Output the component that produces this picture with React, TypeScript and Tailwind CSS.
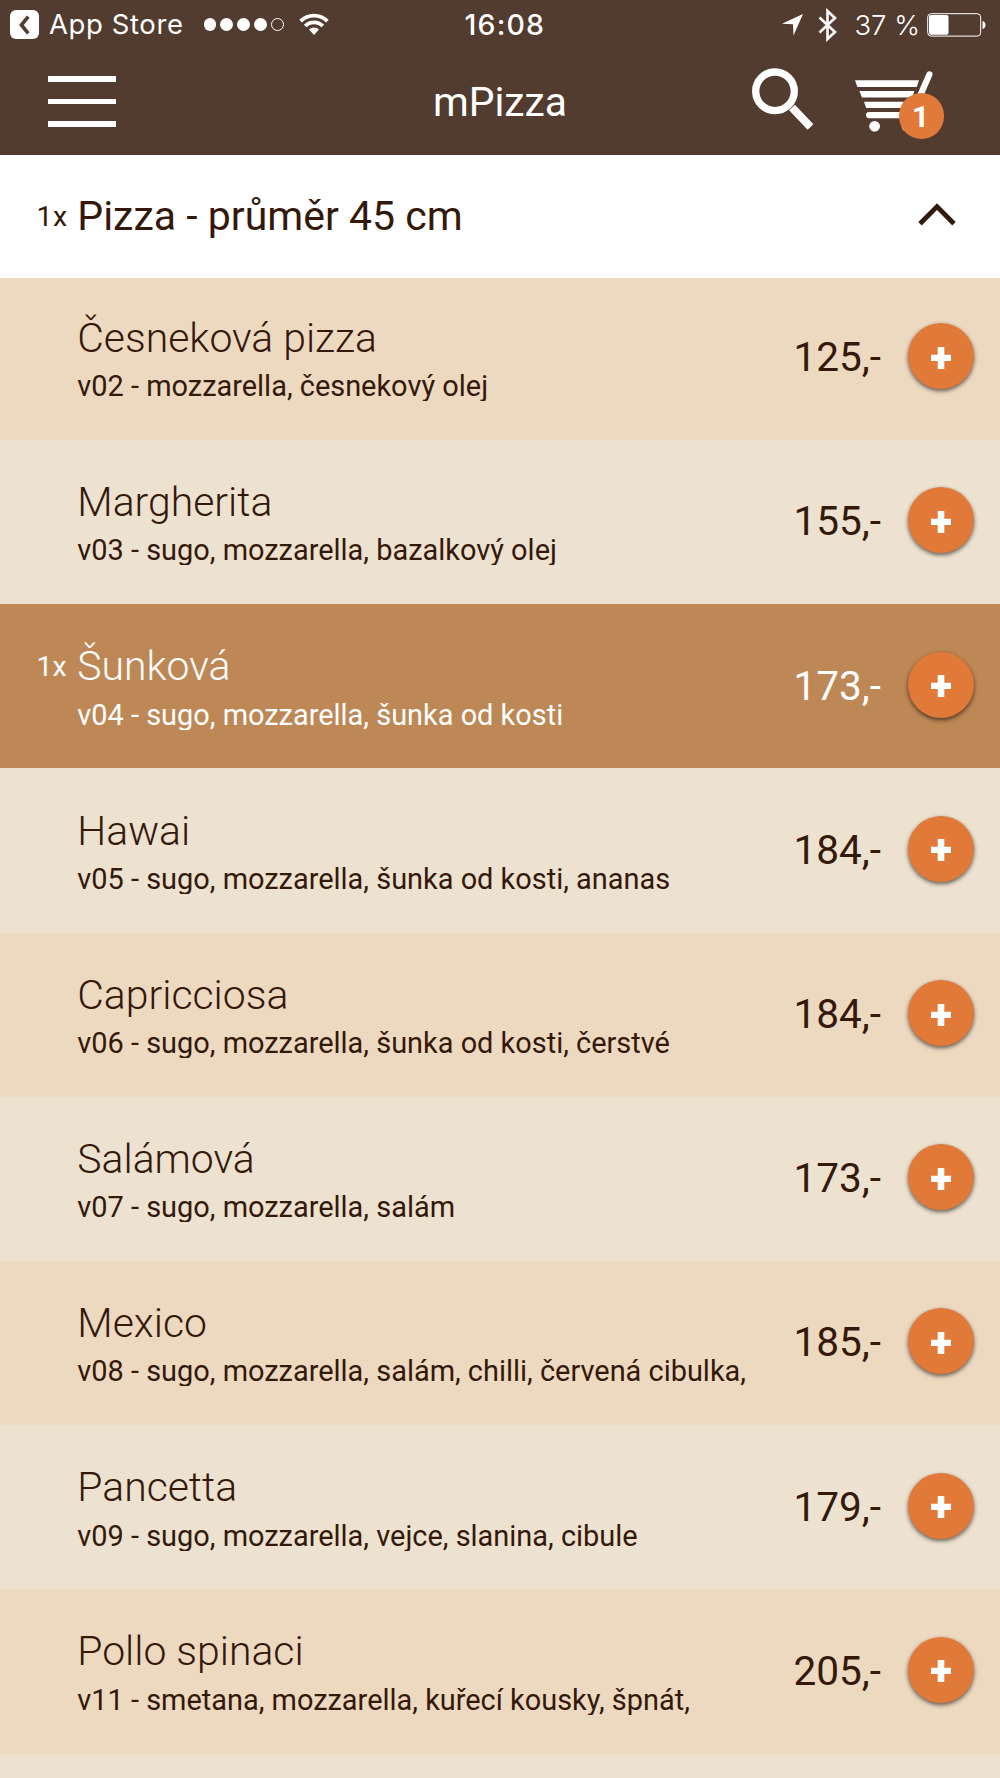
import { clsx } from "clsx";

type Pizza = {
  code: string;
  name: string;
  ingredients: string;
  price: number;
  count?: number;
};

const pizzas: Pizza[] = [
  { code: "v02", name: "Česneková pizza", ingredients: "mozzarella, česnekový olej", price: 125 },
  { code: "v03", name: "Margherita", ingredients: "sugo, mozzarella, bazalkový olej", price: 155 },
  { code: "v04", name: "Šunková", ingredients: "sugo, mozzarella, šunka od kosti", price: 173, count: 1 },
  { code: "v05", name: "Hawai", ingredients: "sugo, mozzarella, šunka od kosti, ananas", price: 184 },
  { code: "v06", name: "Capricciosa", ingredients: "sugo, mozzarella, šunka od kosti, čerstvé", price: 184 },
  { code: "v07", name: "Salámová", ingredients: "sugo, mozzarella, salám", price: 173 },
  { code: "v08", name: "Mexico", ingredients: "sugo, mozzarella, salám, chilli, červená cibulka,", price: 185 },
  { code: "v09", name: "Pancetta", ingredients: "sugo, mozzarella, vejce, slanina, cibule", price: 179 },
  { code: "v11", name: "Pollo spinaci", ingredients: "smetana, mozzarella, kuřecí kousky, špnát,", price: 205 },
];

const StatusBar = () => {
  return (
    <div className="grid h-[49px] grid-cols-[455px_auto_1fr] items-center pl-[9.5px] pr-[14px] font-['Inter',sans-serif] text-[27px] leading-[48px]">
      <div className="flex items-center">
        <div className="flex h-[29px] w-[29px] items-center justify-center rounded-[6px] bg-white">
          <svg width="11" height="20" viewBox="0 0 11 20" fill="none" stroke="#523b2f" strokeWidth="3.6">
            <path d="M9.2 1.6 2.4 10l6.8 8.4" />
          </svg>
        </div>
        <span className="-mt-[2px] ml-[10.5px] w-[154.5px] whitespace-nowrap text-[27.5px] tracking-[0.6px]">App Store</span>
        <div className="flex gap-[4.2px]">
          <i className="h-[12.8px] w-[12.8px] rounded-full bg-white" />
          <i className="h-[12.8px] w-[12.8px] rounded-full bg-white" />
          <i className="h-[12.8px] w-[12.8px] rounded-full bg-white" />
          <i className="h-[12.8px] w-[12.8px] rounded-full bg-white" />
          <i className="h-[12.8px] w-[12.8px] rounded-full border border-white" />
        </div>
        <svg className="-mt-[2px] ml-[14.6px]" width="30" height="22" viewBox="0 0 30 22" fill="none" stroke="#fff" strokeWidth="3.8">
          <path d="M1.6 8.2a19 19 0 0 1 26.8 0" />
          <path d="M6.2 13a12.4 12.4 0 0 1 17.6 0" />
          <path d="M15 22l-5-5.4a7 7 0 0 1 10 0z" fill="#fff" stroke="none" />
        </svg>
      </div>
      <span className="text-[28.5px] font-medium tracking-[1.2px]">16:08</span>
      <div className="flex items-center justify-end">
        <svg width="21" height="22" viewBox="0 0 21 22" fill="#fff">
          <path d="M21 0 11.5 21.5 11 10.3 0 9.7z" />
        </svg>
        <svg className="ml-[15px]" width="20" height="34" viewBox="0 0 20 34" fill="none" stroke="#fff" strokeWidth="2.6">
          <path d="M1.5 9.5 17 24l-7.5 7V3L17 10 1.5 24.5" />
        </svg>
        <span className="ml-[16px] mr-[7px] whitespace-nowrap text-[27.5px] font-light">37 %</span>
        <svg width="59" height="24" viewBox="0 0 59 24">
          <rect x="0.7" y="0.7" width="53" height="22.4" rx="3.5" fill="none" stroke="#fff" strokeWidth="1" />
          <rect x="2" y="2" width="19.5" height="19.8" rx="2" fill="#fff" />
          <path d="M55.5 8c4 1 4 7 0 8z" fill="#fff" />
        </svg>
      </div>
    </div>
  );
};

const CartIcon = () => {
  return (
    <svg width="79" height="64" viewBox="0 0 79 64" fill="#fff">
      <path d="M0 9.3h64l-2.2 6.7H2.4zM4.4 20h55l-2.2 6.6H7zM9 30.7h46l-2 6.3H11.2z" />
      <rect x="11" y="41" width="44" height="6.2" rx="3.1" />
      <path d="M74.4 3.4 61 34" stroke="#fff" strokeWidth="6.2" strokeLinecap="round" />
      <circle cx="19.6" cy="55.3" r="5.4" />
      <circle cx="52" cy="55.3" r="5.4" />
    </svg>
  );
};

const NavBar = () => {
  return (
    <div className="grid h-[105.5px] grid-cols-[1fr_auto_1fr] items-start">
      <div className="ml-[48px] mt-[27.3px] flex w-[68px] flex-col gap-[17.2px]">
        <div className="h-[5.4px] bg-white" />
        <div className="h-[5.4px] bg-white" />
        <div className="h-[5.4px] bg-white" />
      </div>
      <h1 className="mt-[28px] text-[40.8px] leading-[50px]">mPizza</h1>
      <div className="mr-[55px] flex justify-end">
        <svg className="mt-[19.4px]" width="64" height="64" viewBox="0 0 64 64" fill="none" stroke="#fff" strokeWidth="7.3">
          <circle cx="25" cy="23.3" r="19.3" />
          <path d="M42 39.5 60.5 59" strokeWidth="8" />
        </svg>
        <div className="relative ml-[41px] mt-[22px] w-[90px]">
          <CartIcon />
          <span className="absolute left-[43.7px] top-[22px] h-[45.6px] w-[45.6px] rounded-full bg-[#e17a39] pr-[2px] text-center text-[30px] font-bold leading-[48px]">
            1
          </span>
        </div>
      </div>
    </div>
  );
};

const CategoryHeader = () => {
  return (
    <div className="flex h-[123.4px] items-start bg-white text-[#34190b]">
      <span className="ml-[36.6px] mt-[37px] w-[40.7px] text-[28.5px] leading-[50px] tracking-[0.4px]">1x</span>
      <h2 className="mt-[36.4px] text-[41px] leading-[50px]">Pizza - průměr 45 cm</h2>
      <svg className="ml-auto mr-[44px] mt-[48.6px]" width="38" height="24" viewBox="0 0 38 24" fill="none" stroke="#34190b" strokeWidth="4.8">
        <path d="M2 20.8 19 3.6l17 17.2" />
      </svg>
    </div>
  );
};

const PizzaRow = ({ pizza }: { pizza: Pizza }) => {
  return (
    <div
      className={clsx(
        "flex h-[164.2px] shrink-0 items-end first:h-[162.2px]",
        pizza.count
          ? "bg-[#be8756] text-white"
          : "text-[#34190b] odd:bg-[#edd8c0] even:bg-[#ede1cf]"
      )}
    >
      <span className="ml-[36.4px] w-[40.9px] pb-[76px] text-[28.5px] leading-[50px]">
        {pizza.count && `${pizza.count}x`}
      </span>
      <div className="flex flex-1 flex-col gap-[8.3px] pb-[38.8px]">
        <h3 className="text-[40.9px] font-light leading-[50px]">{pizza.name}</h3>
        <p className="overflow-hidden whitespace-nowrap text-[28.93px] leading-[30px]">
          {pizza.code} - {pizza.ingredients}
        </p>
      </div>
      <span className="pb-[58.8px] text-[40.6px] leading-[48px]">{pizza.price},-</span>
      <button className="mb-[50.8px] ml-[27px] mr-[26px] flex h-[66px] w-[66px] items-center justify-center rounded-full bg-[#e17a39] shadow-[0_2px_4px_rgba(0,0,0,0.6)]">
        <svg className="mt-[3px]" width="20" height="22" viewBox="0 0 20 22" fill="#fff">
          <path d="M6.7 0h6.6v7.8H20v6.2h-6.7v8H6.7v-8H0V7.8h6.7z" />
        </svg>
      </button>
    </div>
  );
};

export default function App() {
  return (
    <div className="flex h-[1778px] w-[1000px] flex-col overflow-hidden bg-[#ede1cf] font-['Roboto',sans-serif]">
      <header className="bg-[#523b2f] text-white">
        <StatusBar />
        <NavBar />
      </header>
      <CategoryHeader />
      <div className="flex flex-col">
        {pizzas.map((pizza) => (
          <PizzaRow key={pizza.code} pizza={pizza} />
        ))}
      </div>
    </div>
  );
}
